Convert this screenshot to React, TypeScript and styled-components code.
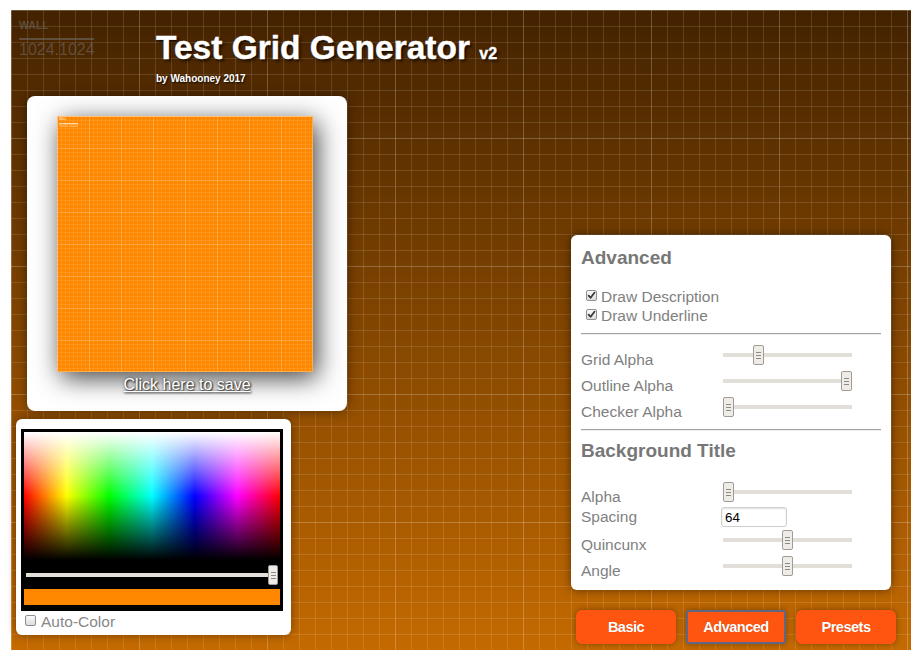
import React from "react";
import styled, { createGlobalStyle } from "styled-components";

const GlobalStyle = createGlobalStyle`
  html, body { margin: 0; padding: 0; background: #ffffff; }
  body { font-family: "Liberation Sans", Arial, sans-serif; }
`;

const Page = styled.div`
  padding: 10px 0 0 11px;
`;

const Frame = styled.main`
  width: 900px;
  height: 640px;
  display: flex;
  flex-direction: column;
  background-color: #c26800;
  background-image:
    linear-gradient(to right, rgba(255, 255, 255, 0.12) 1px, transparent 1px),
    linear-gradient(to bottom, rgba(255, 255, 255, 0.12) 1px, transparent 1px),
    linear-gradient(to right, rgba(255, 255, 255, 0.12) 1px, transparent 1px),
    linear-gradient(to bottom, rgba(255, 255, 255, 0.12) 1px, transparent 1px),
    linear-gradient(to bottom, #432200, #c46a00);
  background-size: 128px 128px, 128px 128px, 16px 16px, 16px 16px, 100% 100%;
`;

const Header = styled.header`
  display: flex;
  height: 86px;
  flex-shrink: 0;
`;

const HeaderDesc = styled.div`
  width: 145px;
  box-sizing: border-box;
  padding: 9px 0 0 8px;
`;

const Description = styled.div<{ $scale: number; $color: string }>`
  width: ${(p) => 75 * p.$scale}px;
  color: ${(p) => p.$color};
  font-family: "Liberation Sans", Arial, sans-serif;
  white-space: nowrap;
`;

const DescName = styled.div<{ $scale: number }>`
  font-size: ${(p) => 10.5 * p.$scale}px;
  line-height: ${(p) => 13 * p.$scale}px;
  font-weight: 700;
  margin-bottom: ${(p) => 6 * p.$scale}px;
`;

const DescRule = styled.div<{ $scale: number }>`
  height: ${(p) => Math.max(1, 2 * p.$scale)}px;
  background: currentColor;
`;

const DescSize = styled.div<{ $scale: number }>`
  font-size: ${(p) => 16 * p.$scale}px;
  line-height: ${(p) => 19 * p.$scale}px;
`;

const TitleBlock = styled.div`
  padding-top: 20px;
  color: #ffffff;
`;

const Title = styled.h1`
  margin: 0;
  font-size: 33.5px;
  line-height: 36px;
  font-weight: 700;
  white-space: nowrap;
  -webkit-text-stroke: 0.4px #ffffff;
  text-shadow: 2px 2px 3px rgba(0, 0, 0, 0.75);
`;

const Version = styled.span`
  font-size: 16px;
`;

const Byline = styled.div`
  margin-top: 1px;
  font-size: 10px;
  line-height: 11px;
  font-weight: 700;
  text-shadow: 1px 1px 2px rgba(0, 0, 0, 0.85);
`;

const Body = styled.div`
  flex: 1;
  display: flex;
  justify-content: space-between;
`;

const LeftColumn = styled.div`
  display: flex;
  flex-direction: column;
  align-items: flex-start;
`;

const PreviewCard = styled.section`
  width: 320px;
  height: 315px;
  box-sizing: border-box;
  margin-left: 16px;
  padding-top: 20px;
  display: flex;
  flex-direction: column;
  align-items: center;
  background: #ffffff;
  border-radius: 8px;
  box-shadow: 0 0 12px rgba(0, 0, 0, 0.45);
`;

const PreviewImage = styled.div`
  align-self: flex-start;
  margin-left: 30px;
  width: 256px;
  height: 256px;
  box-sizing: border-box;
  padding: 1px;
  overflow: hidden;
  border: 1px solid rgba(255, 255, 255, 0.3);
  background-color: #ff8800;
  background-image:
    linear-gradient(to right, rgba(255, 255, 255, 0.16) 1px, transparent 1px),
    linear-gradient(to bottom, rgba(255, 255, 255, 0.16) 1px, transparent 1px),
    linear-gradient(to right, rgba(255, 255, 255, 0.09) 1px, transparent 1px),
    linear-gradient(to bottom, rgba(255, 255, 255, 0.09) 1px, transparent 1px);
  background-size: 32px 32px, 32px 32px, 4px 4px, 4px 4px;
  background-position: -1px -1px;
  box-shadow: 4px 6px 24px rgba(0, 0, 0, 0.75);
`;

const SaveLink = styled.a`
  display: block;
  margin-top: 3px;
  font-size: 16px;
  line-height: 19px;
  color: #ffffff;
  text-decoration: underline;
  text-shadow: 1px 1px 2px rgba(0, 0, 0, 0.9), 0 0 3px rgba(0, 0, 0, 0.5);
  cursor: pointer;
`;

const ColorCard = styled.section`
  width: 275px;
  height: 216px;
  box-sizing: border-box;
  margin: 8px 0 0 5px;
  padding: 10px 0 0 5px;
  background: #ffffff;
  border-radius: 6px;
  box-shadow: 0 0 10px rgba(0, 0, 0, 0.4);
`;

const Picker = styled.div`
  width: 256px;
  padding: 3px 3px 6px;
  background: #000000;
`;

const Spectrum = styled.div`
  height: 128px;
  background-image:
    linear-gradient(to bottom, #ffffff 0%, rgba(255, 255, 255, 0) 50%, rgba(0, 0, 0, 0) 50%, #000000 100%),
    linear-gradient(to right, #ff0000, #ffff00, #00ff00, #00ffff, #0000ff, #ff00ff, #ff0000);
`;

const HueRow = styled.div`
  height: 29px;
  display: flex;
  align-items: center;
  padding-left: 2px;
`;

const ColorBar = styled.div<{ $color: string }>`
  height: 16px;
  background: ${(p) => p.$color};
`;

const SliderBox = styled.div<{ $width: number }>`
  position: relative;
  display: inline-block;
  vertical-align: baseline;
  width: ${(p) => p.$width}px;
  height: 20px;
  box-sizing: border-box;
  padding-top: 8px;
`;

const Track = styled.div`
  height: 4px;
  background: #e2ded8;
`;

const Thumb = styled.div<{ $left: number; $width: number }>`
  position: absolute;
  top: 0;
  left: ${(p) => p.$left}px;
  width: ${(p) => p.$width}px;
  height: 20px;
  box-sizing: border-box;
  border: 1px solid #a19b95;
  border-radius: 2px;
  background: #efece8;
  &::after {
    content: "";
    position: absolute;
    left: 50%;
    top: 6px;
    width: 5px;
    height: 7px;
    margin-left: -2.5px;
    background: repeating-linear-gradient(to bottom, #8f8983 0 1px, transparent 1px 3px);
  }
`;

type SliderProps = { value: number; width: number; thumb?: number };

function Slider({ value, width, thumb = 11 }: SliderProps) {
  return (
    <SliderBox $width={width}>
      <Track />
      <Thumb $left={Math.round(value * (width - thumb))} $width={thumb} />
    </SliderBox>
  );
}

const CheckBox = styled.span<{ $gap: number }>`
  display: inline-block;
  vertical-align: baseline;
  width: 11px;
  height: 11px;
  box-sizing: border-box;
  margin: 0 ${(p) => p.$gap}px 1px 0;
  border: 1px solid #8f8f8f;
  border-radius: 2px;
  background: linear-gradient(#fbfbfb, #dcdcdc);
  svg {
    display: block;
  }
`;

function Check({ checked, gap = 4 }: { checked?: boolean; gap?: number }) {
  return (
    <CheckBox $gap={gap}>
      {checked ? (
        <svg width="9" height="9" viewBox="0 0 9 9">
          <path d="M1.6 4.6 L3.6 6.8 L7.6 1.6" fill="none" stroke="#333" strokeWidth="1.7" strokeLinecap="round" strokeLinejoin="round" />
        </svg>
      ) : null}
    </CheckBox>
  );
}

const AutoColorRow = styled.label`
  display: block;
  margin-top: 1px;
  padding-left: 4px;
  font-size: 15.5px;
  line-height: 19px;
  color: #888888;
`;

const RightColumn = styled.div`
  align-self: flex-end;
  display: flex;
  flex-direction: column;
  width: 325px;
  margin: 0 15px 6px 0;
`;

const Panel = styled.section`
  width: 320px;
  box-sizing: border-box;
  padding: 11px 10px 10px;
  background: #ffffff;
  border-radius: 6px;
  box-shadow: 0 0 10px rgba(0, 0, 0, 0.5);
  color: #7f7f7f;
  font-size: 15.5px;
  line-height: 19px;
`;

const PanelHeading = styled.h3`
  margin: 0 0 18px;
  font-size: 19px;
  line-height: 23px;
  font-weight: 700;
  color: #777777;
`;

const CheckRow = styled.label`
  display: block;
  padding-left: 5px;
`;

const Divider = styled.hr`
  margin: 8px 0;
  height: 0;
  border: 0;
  border-top: 1px solid #a2a2a2;
  border-bottom: 1px solid #ececec;
`;

const ControlRow = styled.div`
  white-space: nowrap;
  ${SliderBox} {
    margin: 2px 0 0 2px;
  }
`;

const RowLabel = styled.span`
  display: inline-block;
  width: 140px;
`;

const NumberField = styled.input`
  width: 66px;
  height: 20px;
  box-sizing: border-box;
  margin: 1px 0;
  padding: 0 3px;
  vertical-align: baseline;
  border: 1px solid #cfcfcf;
  border-radius: 3px;
  box-shadow: inset 0 1px 2px rgba(0, 0, 0, 0.12);
  font-family: "Liberation Sans", Arial, sans-serif;
  font-size: 13.33px;
  color: #000000;
  background: #ffffff;
  outline: none;
`;

const ButtonRow = styled.nav`
  display: flex;
  gap: 10px;
  margin: 20px 0 0 5px;
`;

const TabButton = styled.button<{ $active?: boolean }>`
  width: 100px;
  height: 34px;
  box-sizing: border-box;
  padding: 0;
  border: 2px solid ${(p) => (p.$active ? "#5f6787" : "#ff5511")};
  border-radius: ${(p) => (p.$active ? 3 : 6)}px;
  background: #ff5511;
  color: #ffffff;
  font-family: "Liberation Sans", Arial, sans-serif;
  font-size: 14.5px;
  font-weight: 700;
  letter-spacing: -0.5px;
  text-shadow: 0 0 1px rgba(0, 0, 0, 0.3);
  box-shadow: 0 0 6px rgba(0, 0, 0, 0.35);
  cursor: pointer;
`;

function WallDescription({ scale, color }: { scale: number; color: string }) {
  return (
    <Description $scale={scale} $color={color}>
      <DescName $scale={scale}>WALL</DescName>
      <DescRule $scale={scale} />
      <DescSize $scale={scale}>1024.1024</DescSize>
    </Description>
  );
}

const advancedSliders = [
  { label: "Grid Alpha", value: 0.254 },
  { label: "Outline Alpha", value: 1 },
  { label: "Checker Alpha", value: 0 },
];

export default function App() {
  return (
    <>
      <GlobalStyle />
      <Page>
        <Frame>
          <Header>
            <HeaderDesc>
              <WallDescription scale={1} color="rgba(110, 106, 100, 0.6)" />
            </HeaderDesc>
            <TitleBlock>
              <Title>
                Test Grid Generator <Version>v2</Version>
              </Title>
              <Byline>by Wahooney 2017</Byline>
            </TitleBlock>
          </Header>
          <Body>
            <LeftColumn>
              <PreviewCard>
                <PreviewImage>
                  <WallDescription scale={0.25} color="rgba(255, 230, 200, 0.85)" />
                </PreviewImage>
                <SaveLink>Click here to save</SaveLink>
              </PreviewCard>
              <ColorCard>
                <Picker>
                  <Spectrum />
                  <HueRow>
                    <Slider value={1} width={252} thumb={10} />
                  </HueRow>
                  <ColorBar $color="#ff8800" />
                </Picker>
                <AutoColorRow>
                  <Check gap={5} />
                  Auto-Color
                </AutoColorRow>
              </ColorCard>
            </LeftColumn>
            <RightColumn>
              <Panel>
                <PanelHeading>Advanced</PanelHeading>
                <CheckRow>
                  <Check checked />
                  Draw Description
                </CheckRow>
                <CheckRow>
                  <Check checked />
                  Draw Underline
                </CheckRow>
                <Divider />
                {advancedSliders.map((s) => (
                  <ControlRow key={s.label}>
                    <RowLabel>{s.label}</RowLabel>
                    <Slider value={s.value} width={129} />
                  </ControlRow>
                ))}
                <Divider />
                <PanelHeading>Background Title</PanelHeading>
                <ControlRow>
                  <RowLabel>Alpha</RowLabel>
                  <Slider value={0} width={129} />
                </ControlRow>
                <ControlRow>
                  <RowLabel>Spacing</RowLabel>
                  <NumberField defaultValue="64" />
                </ControlRow>
                <ControlRow>
                  <RowLabel>Quincunx</RowLabel>
                  <Slider value={0.5} width={129} />
                </ControlRow>
                <ControlRow>
                  <RowLabel>Angle</RowLabel>
                  <Slider value={0.5} width={129} />
                </ControlRow>
              </Panel>
              <ButtonRow>
                <TabButton>Basic</TabButton>
                <TabButton $active>Advanced</TabButton>
                <TabButton>Presets</TabButton>
              </ButtonRow>
            </RightColumn>
          </Body>
        </Frame>
      </Page>
    </>
  );
}
